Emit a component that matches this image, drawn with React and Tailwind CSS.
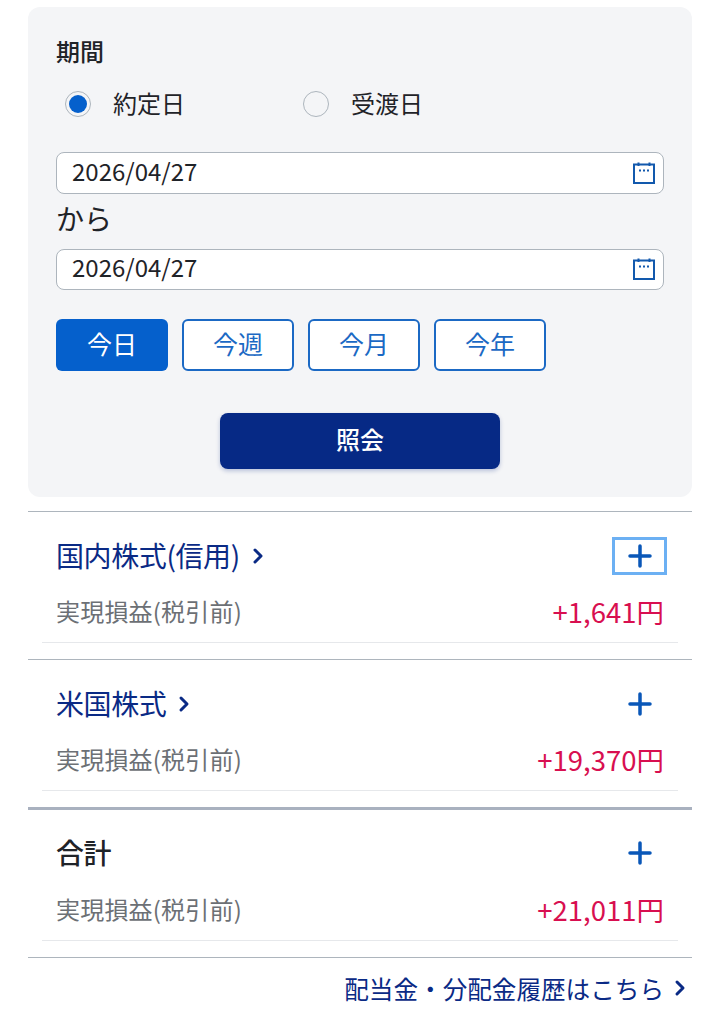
import { ChevronRight } from 'lucide-react'

const fontClass = "font-['Noto_Sans_CJK_JP',sans-serif]"

function CalendarIcon() {
    return (
        <svg width="24" height="24" viewBox="0 0 24 24" fill="none" className="text-[#1259ad]">
            <rect x="2" y="3.5" width="20" height="18.5" stroke="currentColor" strokeWidth="2" />
            <path d="M6.5 1.5V5M17.5 1.5V5" stroke="currentColor" strokeWidth="2" />
            <path d="M7 9.5h2M11 9.5h2M15 9.5h2" stroke="currentColor" strokeWidth="2" />
        </svg>
    )
}

function PlusIcon() {
    return (
        <svg width="26" height="26" viewBox="0 0 26 26" fill="none" className="text-[#0a57b8]">
            <path d="M3 13H23M13 3V23" stroke="currentColor" strokeWidth="3.5" strokeLinecap="round" />
        </svg>
    )
}

function Radio({ checked, label }) {
    return (
        <div className="flex items-center gap-[22px]">
            <span className="w-[26px] h-[26px] rounded-full border border-[#adb5bd] bg-[#f4f5f7] flex items-center justify-center">
                {checked && <span className="w-[18px] h-[18px] rounded-full bg-[#0560cc]" />}
            </span>
            <span className="text-[24px] leading-[36px] pb-0.5 text-[#1f2328]">{label}</span>
        </div>
    )
}

function DateInput() {
    return (
        <div className="h-[41.5px] rounded-lg border border-[#adb5bd] bg-white pl-[15px] pr-[7px] flex items-center justify-between">
            <span className="text-[24px] leading-[36px] pb-1 text-[#1f2328]">2026/04/27</span>
            <CalendarIcon />
        </div>
    )
}

function PeriodButton({ label, active }) {
    if (active) {
        return <button className="w-[112px] h-[52px] pb-0.5 rounded-md bg-[#0560cc] text-white text-[25px]">{label}</button>
    }
    return <button className="w-[112px] h-[52px] pb-0.5 rounded-md border-2 border-[#1b69c4] bg-white text-[#1b69c4] text-[25px]">{label}</button>
}

function Section({ title, amount, link, focused, className, headerClass }) {
    return (
        <div className={className}>
            <div className={"h-[85px] pl-7 pr-[25px] flex items-start justify-between " + headerClass}>
                <div className={"h-[38px] flex items-center " + (link ? "gap-1.5 text-[#0a2a85]" : "text-[#1f2328]")}>
                    <span className={"text-[28px] leading-[36px] pb-0.5 tracking-[-0.4px]" + (link ? "" : " font-medium")}>{title}</span>
                    {link && <ChevronRight size={24} strokeWidth={3} />}
                </div>
                <div className={"w-[55px] h-[38px] flex items-center justify-center border-[3px] " + (focused ? "border-[#6cb0f3]" : "border-transparent")}>
                    <PlusIcon />
                </div>
            </div>
            <div className="mx-3.5 h-[46px] px-3.5 border-b border-[#e6e8eb] flex items-start justify-between">
                <span className="text-[24px] leading-[28px] tracking-[0.2px] text-[#6c7075]">実現損益(税引前)</span>
                <span className="text-[27.5px] leading-[28px] text-[#d80f50]">{amount}</span>
            </div>
        </div>
    )
}

export default function App() {
    return (
        <div className={"w-[720px] h-[1031px] bg-white px-7 pt-[7px] overflow-hidden " + fontClass}>
            <div className="h-[490px] rounded-xl bg-[#f4f5f7] px-7 pt-[26px]">
                <div className="text-[24px] leading-[36px] font-medium text-[#1f2328]">期間</div>
                <div className="flex pl-[9px] mt-[16px] gap-[118px]">
                    <Radio checked label="約定日" />
                    <Radio label="受渡日" />
                </div>
                <div className="mt-[29px]"><DateInput /></div>
                <div className="text-[28px] leading-[49px] pb-1.5 text-[#1f2328]">から</div>
                <DateInput />
                <div className="flex gap-3.5 mt-[29px]">
                    <PeriodButton label="今日" active />
                    <PeriodButton label="今週" />
                    <PeriodButton label="今月" />
                    <PeriodButton label="今年" />
                </div>
                <div className="flex justify-center mt-[42px]">
                    <button className="w-[280px] h-14 pb-1 rounded-lg bg-[#062985] text-white text-[24px] font-medium shadow-[0_2px_4px_rgba(6,41,133,0.25)]">照会</button>
                </div>
            </div>

            <Section className="mt-3.5 border-t border-[#adb5bd] h-[148px]" headerClass="pt-[25px]" title="国内株式(信用)" amount="+1,641円" link focused />
            <Section className="border-t border-[#adb5bd] h-[148px]" headerClass="pt-[25px]" title="米国株式" amount="+19,370円" link />
            <Section className="border-t-[3px] border-[#a9b1bf] h-[150px]" headerClass="pt-[24px]" title="合計" amount="+21,011円" />

            <div className="border-t border-[#adb5bd] pt-3 flex items-center justify-end gap-1 text-[#0a2a85]">
                <span className="text-[24.6px] leading-[36px]">配当金・分配金履歴はこちら</span>
                <ChevronRight size={24} strokeWidth={3} />
            </div>
        </div>
    )
}
